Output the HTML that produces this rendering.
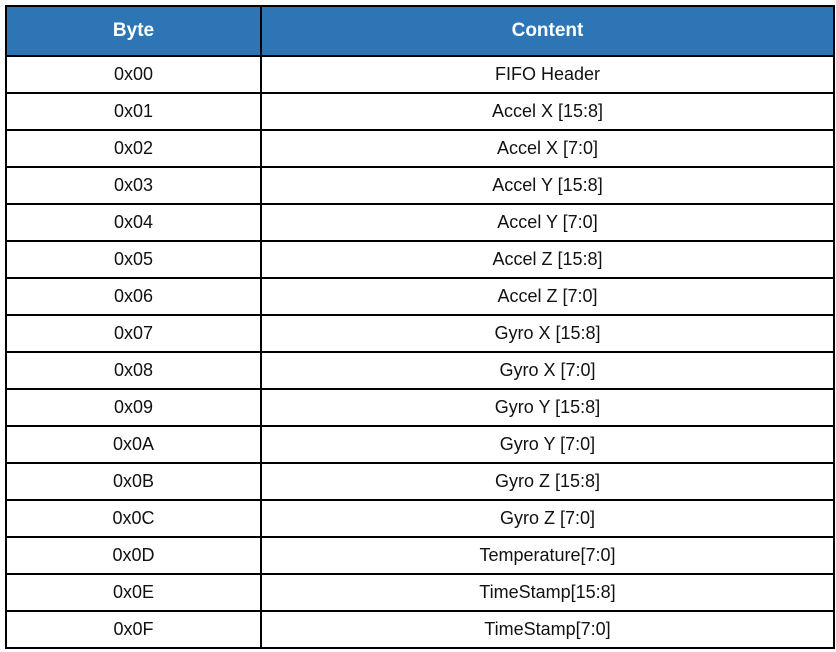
<!DOCTYPE html>
<html><head><style>
html,body{margin:0;padding:0;background:#fff;width:836px;height:652px;overflow:hidden}
table{position:absolute;left:5px;top:5px;border-collapse:collapse;font-family:"Liberation Sans",sans-serif;font-size:18px;color:#111}
td,th{border:2px solid #000;text-align:center;padding:0;height:35px}
th{background:#2E75B6;color:#fff;font-weight:bold;height:48px;font-size:19px}
</style></head><body>
<table>
<colgroup><col style="width:255px"><col style="width:573px"></colgroup>
<tr><th>Byte</th><th>Content</th></tr>
<tr><td>0x00</td><td>FIFO Header</td></tr>
<tr><td>0x01</td><td>Accel X [15:8]</td></tr>
<tr><td>0x02</td><td>Accel X [7:0]</td></tr>
<tr><td>0x03</td><td>Accel Y [15:8]</td></tr>
<tr><td>0x04</td><td>Accel Y [7:0]</td></tr>
<tr><td>0x05</td><td>Accel Z [15:8]</td></tr>
<tr><td>0x06</td><td>Accel Z [7:0]</td></tr>
<tr><td>0x07</td><td>Gyro X [15:8]</td></tr>
<tr><td>0x08</td><td>Gyro X [7:0]</td></tr>
<tr><td>0x09</td><td>Gyro Y [15:8]</td></tr>
<tr><td>0x0A</td><td>Gyro Y [7:0]</td></tr>
<tr><td>0x0B</td><td>Gyro Z [15:8]</td></tr>
<tr><td>0x0C</td><td>Gyro Z [7:0]</td></tr>
<tr><td>0x0D</td><td>Temperature[7:0]</td></tr>
<tr><td>0x0E</td><td>TimeStamp[15:8]</td></tr>
<tr><td>0x0F</td><td>TimeStamp[7:0]</td></tr>
</table>
</body></html>
